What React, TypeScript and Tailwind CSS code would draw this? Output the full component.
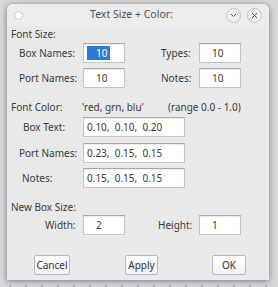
import React from "react";

const font = { fontFamily: '"Noto Sans", "Open Sans", sans-serif' };

function SmallInput({ value, selected }: { value: string; selected?: boolean }) {
  return (
    <div className="w-[42px] h-[20px] bg-white border border-[#c4c4c4] border-t-[#a9a9a9] shadow-[inset_0_1px_1px_rgba(0,0,0,0.08)] flex items-center text-[10px] text-[#3a3a3a]">
      {selected ? (
        <span className="ml-[3px] h-[14px] pl-[9px] pr-[3px] bg-[#2d7bd6] text-white flex items-center leading-none">{value}</span>
      ) : (
        <span className="pl-[12px] leading-none">{value}</span>
      )}
    </div>
  );
}

function WideInput({ value }: { value: string }) {
  return (
    <div className="w-[102px] h-[20px] bg-white border border-[#c4c4c4] border-t-[#a9a9a9] shadow-[inset_0_1px_1px_rgba(0,0,0,0.08)] flex items-center text-[10px] text-[#3a3a3a] pl-[3px] whitespace-pre leading-none">
      {value}
    </div>
  );
}

function Btn({ label, w }: { label: string; w: string }) {
  return (
    <div className={`${w} h-[20px] bg-gradient-to-b from-white to-[#f1f1f1] border border-[#b9b9b9] rounded-[2px] flex items-center justify-center text-[10px] text-[#333] leading-none`}>
      {label}
    </div>
  );
}

export default function App() {
  return (
    <div
      className="w-[278px] h-[287px] bg-[#d9d9dc] bg-[radial-gradient(circle,#a8a8c0_1px,transparent_1.2px)] bg-[size:16px_16px] bg-[position:2px_6px] overflow-hidden"
      style={font}
    >
      <div className="ml-[7px] mt-[4px] w-[262px] h-[276px] bg-[#e9e9e9] rounded-t-[6px] shadow-[0_1px_6px_rgba(0,0,0,0.45)] flex flex-col text-[#3a3a3a]">
        {/* title bar */}
        <div className="h-[22px] flex items-center px-[7px] bg-[#ececec] rounded-t-[6px]">
          <div className="w-[9px] h-[9px] rounded-full bg-white border border-[#c9c9c9]" />
          <div className="flex-1 text-center text-[10.5px] text-[#505050] pl-[14px]">Text Size + Color:</div>
          <div className="flex gap-[6px] items-center">
            <div className="w-[15px] h-[15px] rounded-full border border-[#c4c4c4] bg-[#efefef] flex items-center justify-center">
              <svg width="7" height="5" viewBox="0 0 7 5"><path d="M1 1 L3.5 3.5 L6 1" fill="none" stroke="#555" strokeWidth="1" /></svg>
            </div>
            <div className="w-[15px] h-[15px] rounded-full border border-[#c4c4c4] bg-[#efefef] flex items-center justify-center">
              <svg width="7" height="7" viewBox="0 0 7 7"><path d="M1 1 L6 6 M6 1 L1 6" fill="none" stroke="#555" strokeWidth="1" /></svg>
            </div>
          </div>
        </div>

        {/* Font Size */}
        <div className="h-[14px] mt-[1px] pl-[4px] text-[10px] flex items-center">Font Size:</div>
        <div className="mt-[2px] h-[20px] flex items-center">
          <div className="w-[76px] pl-[12px] text-[10px]">Box Names:</div>
          <SmallInput value="10" selected />
          <div className="w-[36px]" />
          <div className="w-[38px] text-[10px]">Types:</div>
          <SmallInput value="10" />
        </div>
        <div className="mt-[5px] h-[20px] flex items-center">
          <div className="w-[76px] pl-[12px] text-[10px]">Port Names:</div>
          <SmallInput value="10" />
          <div className="w-[36px]" />
          <div className="w-[38px] text-[10px]">Notes:</div>
          <SmallInput value="10" />
        </div>

        {/* Font Color */}
        <div className="h-[14px] mt-[12px] text-[10px] flex items-center">
          <div className="w-[75px] pl-[4px]">Font Color:</div>
          <div className="w-[86px]">'red, grn, blu'</div>
          <div>(range 0.0 - 1.0)</div>
        </div>
        <div className="mt-[3px] h-[20px] flex items-center">
          <div className="w-[76px] pl-[16px] text-[10px]">Box Text:</div>
          <WideInput value="0.10,  0.10,  0.20" />
        </div>
        <div className="mt-[6px] h-[20px] flex items-center">
          <div className="w-[76px] pl-[12px] text-[10px]">Port Names:</div>
          <WideInput value="0.23,  0.15,  0.15" />
        </div>
        <div className="mt-[5px] h-[20px] flex items-center">
          <div className="w-[76px] pl-[15px] text-[10px]">Notes:</div>
          <WideInput value="0.15,  0.15,  0.15" />
        </div>

        {/* New Box Size */}
        <div className="h-[14px] mt-[12px] pl-[4px] text-[10px] flex items-center">New Box Size:</div>
        <div className="mt-[1px] h-[20px] flex items-center">
          <div className="w-[76px] pl-[38px] text-[10px]">Width:</div>
          <SmallInput value="2" />
          <div className="w-[33px]" />
          <div className="w-[41px] text-[10px]">Height:</div>
          <SmallInput value="1" />
        </div>

        {/* Buttons */}
        <div className="mt-[20px] h-[20px] flex items-center">
          <div className="w-[27px]" />
          <Btn label="Cancel" w="w-[36px]" />
          <div className="w-[55px]" />
          <Btn label="Apply" w="w-[33px]" />
          <div className="w-[54px]" />
          <Btn label="OK" w="w-[34px]" />
        </div>
      </div>
    </div>
  );
}
